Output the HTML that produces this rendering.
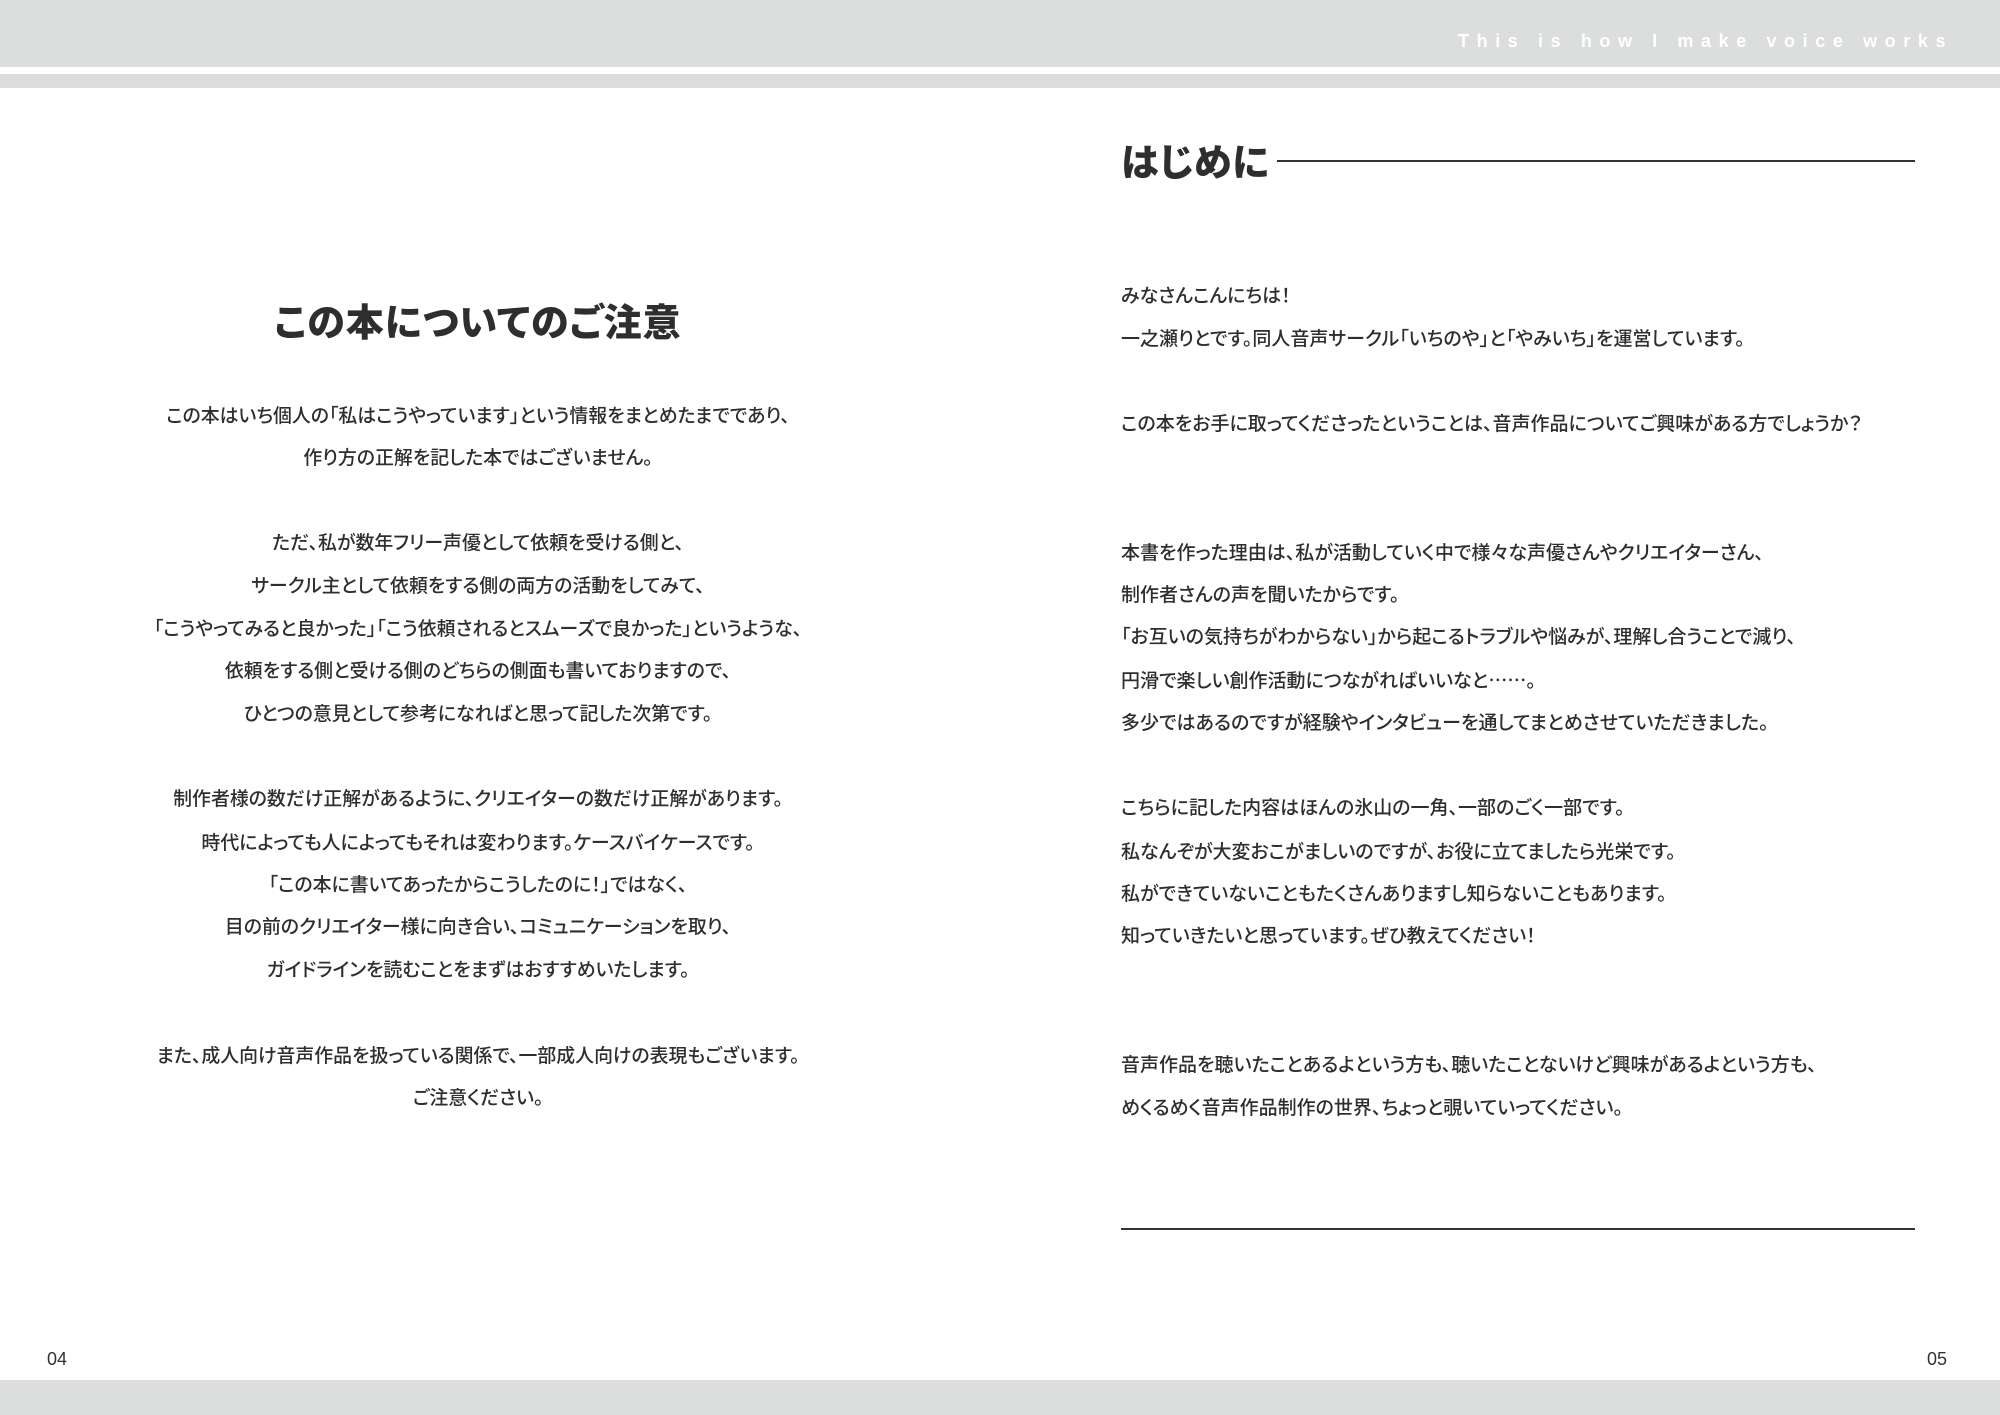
<!DOCTYPE html>
<html><head><meta charset="utf-8"><style>
body{margin:0;width:2000px;height:1415px;position:relative;background:#fff;overflow:hidden;font-family:"Noto Sans CJK JP","Liberation Sans",sans-serif;color:#2e2e2e;font-feature-settings:"palt"}
.g{position:absolute;left:0;width:2000px;background:#dcdedd}
.l{position:absolute;left:0;width:956px;text-align:center;font-size:18.9px;font-weight:500;line-height:24px;white-space:nowrap}
.r{position:absolute;left:1121px;font-size:19px;font-weight:500;line-height:24px;white-space:nowrap}
</style></head><body>
<div class="g" style="top:0;height:67px"></div>
<div class="g" style="top:74px;height:14px"></div>
<div class="g" style="top:1380px;height:35px"></div>
<div style="position:absolute;left:1458px;top:31px;font-family:'Liberation Sans',sans-serif;font-size:18px;font-weight:bold;color:#fff;letter-spacing:7.6px;white-space:nowrap">This is how I make voice works</div>
<div style="position:absolute;left:1121px;top:136px;font-size:38px;font-weight:900;line-height:48px;letter-spacing:0.5px">はじめに</div>
<div style="position:absolute;left:1277px;top:160px;width:638px;height:2px;background:#333"></div>
<div style="position:absolute;left:1121px;top:1228px;width:794px;height:2px;background:#333"></div>
<div class="l" style="top:296px;font-size:38px;font-weight:900;line-height:48px;letter-spacing:1px">この本についてのご注意</div>
<div class="l" style="top:403px">この本はいち個人の「私はこうやっています」という情報をまとめたまでであり、</div>
<div class="l" style="top:445px">作り方の正解を記した本ではございません。</div>
<div class="l" style="top:530px">ただ、私が数年フリー声優として依頼を受ける側と、</div>
<div class="l" style="top:573px">サークル主として依頼をする側の両方の活動をしてみて、</div>
<div class="l" style="top:616px">「こうやってみると良かった」「こう依頼されるとスムーズで良かった」というような、</div>
<div class="l" style="top:658px">依頼をする側と受ける側のどちらの側面も書いておりますので、</div>
<div class="l" style="top:701px">ひとつの意見として参考になればと思って記した次第です。</div>
<div class="l" style="top:786px">制作者様の数だけ正解があるように、クリエイターの数だけ正解があります。</div>
<div class="l" style="top:830px">時代によっても人によってもそれは変わります。ケースバイケースです。</div>
<div class="l" style="top:872px">「この本に書いてあったからこうしたのに！」ではなく、</div>
<div class="l" style="top:914px">目の前のクリエイター様に向き合い、コミュニケーションを取り、</div>
<div class="l" style="top:957px">ガイドラインを読むことをまずはおすすめいたします。</div>
<div class="l" style="top:1043px">また、成人向け音声作品を扱っている関係で、一部成人向けの表現もございます。</div>
<div class="l" style="top:1085px">ご注意ください。</div>
<div class="r" style="top:283px">みなさんこんにちは！</div>
<div class="r" style="top:326px">一之瀬りとです。同人音声サークル「いちのや」と「やみいち」を運営しています。</div>
<div class="r" style="top:411px">この本をお手に取ってくださったということは、音声作品についてご興味がある方でしょうか？</div>
<div class="r" style="top:540px">本書を作った理由は、私が活動していく中で様々な声優さんやクリエイターさん、</div>
<div class="r" style="top:582px">制作者さんの声を聞いたからです。</div>
<div class="r" style="top:624px">「お互いの気持ちがわからない」から起こるトラブルや悩みが、理解し合うことで減り、</div>
<div class="r" style="top:668px">円滑で楽しい創作活動につながればいいなと……。</div>
<div class="r" style="top:710px">多少ではあるのですが経験やインタビューを通してまとめさせていただきました。</div>
<div class="r" style="top:795px">こちらに記した内容はほんの氷山の一角、一部のごく一部です。</div>
<div class="r" style="top:839px">私なんぞが大変おこがましいのですが、お役に立てましたら光栄です。</div>
<div class="r" style="top:881px">私ができていないこともたくさんありますし知らないこともあります。</div>
<div class="r" style="top:923px">知っていきたいと思っています。ぜひ教えてください！</div>
<div class="r" style="top:1052px">音声作品を聴いたことあるよという方も、聴いたことないけど興味があるよという方も、</div>
<div class="r" style="top:1095px">めくるめく音声作品制作の世界、ちょっと覗いていってください。</div>
<div style="position:absolute;left:47px;top:1349px;font-family:'Liberation Sans',sans-serif;font-size:18px;color:#333">04</div>
<div style="position:absolute;left:1927px;top:1349px;font-family:'Liberation Sans',sans-serif;font-size:18px;color:#333">05</div>
</body></html>
